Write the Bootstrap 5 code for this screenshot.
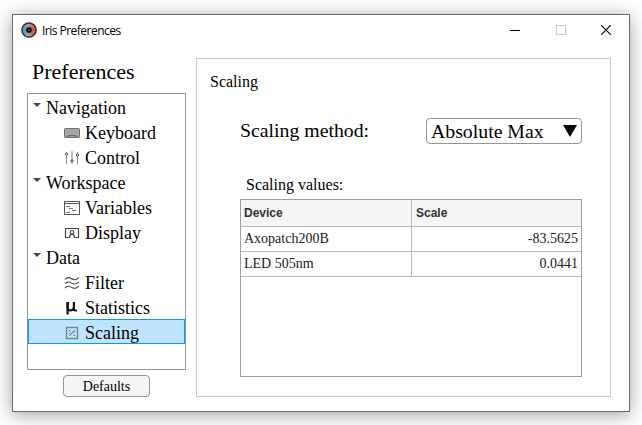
<!DOCTYPE html>
<html lang="en">
<head>
<meta charset="utf-8">
<meta name="viewport" content="width=device-width, initial-scale=1">
<title>Iris Preferences</title>
<link href="https://cdn.jsdelivr.net/npm/bootstrap@5.3.0/dist/css/bootstrap.min.css" rel="stylesheet">
<style>
body{font-family:"Liberation Serif","Times New Roman",serif;color:#000;background:#fff;height:425px;overflow:hidden;padding:14px 12px 13px;line-height:1}
.app-window{width:618px;height:398px;border:1px solid #6b6b6b;background:#fff;box-shadow:0 3px 17px rgba(0,0,0,.38)}
.title-bar{height:30px;padding-left:8px;flex:none}
.title-text{font:12px "Open Sans","Segoe UI",sans-serif;letter-spacing:-.52px;margin-left:5px}
.win-btn{width:45.5px;display:flex;justify-content:center}
.side{width:159px;margin-left:14px}
.side-title{font-size:22px;height:48px;padding:15px 0 0 5px;line-height:24px;white-space:nowrap}
.tree{height:277px;border:1px solid #949494}
.tree-row{height:25px;font-size:18px;line-height:21px;padding-top:4px;border:0}
.tree-row svg{flex:none}
.tree-group{padding-left:5px}
.tree-group svg{margin-right:5px;margin-top:-7px}
.tree-leaf{padding-left:36px}
.tree-leaf svg{margin-right:5px;margin-top:-1px}
.tree-leaf.selected{background:#bfe4ff;box-shadow:inset 0 0 0 1px #0a96ff}
.btn-defaults{width:87px;height:22px;margin:5px 0 0 36px;padding:1px 0 0;font-size:14px;line-height:19px;color:#000;background:#f5f5f5;border:1px solid #949494;border-radius:4px}
.panel{width:415px;height:339px;margin:13px 0 0 10px;border:1px solid #c8c8c8;padding:14px 28px 0 43px}
.panel-title{font-size:16px;line-height:18px;margin-left:-30px}
.method{height:26px;margin-top:27px}
.method-label{font-size:19.8px}
.combo{width:156px;height:26px;border:1px solid #949494;border-radius:4px;padding:0 4px;font-size:19.8px;line-height:24px}
.values-label{font-size:16px;line-height:18px;margin:32px 0 0 6px}
.grid-box{height:178px;width:342px;border:1px solid #a0a0a0;margin-top:5px}
.grid-box table{table-layout:fixed;width:340px;margin:0;font-size:14px;line-height:16px;color:#212121;border-collapse:separate;border-spacing:0}
.grid-box th,.grid-box td{height:25px;padding:0 3px;border-bottom:1px solid #b8b8b8;vertical-align:middle}
.grid-box th{height:27px;background:#f5f5f5;color:#333;font:bold 12px "Liberation Sans",Arial,sans-serif}
.grid-box th:last-child{padding-left:4px}
.grid-box th:first-child,.grid-box td:first-child{width:171px;border-right:1px solid #b8b8b8}
</style>
<script src="https://cdn.jsdelivr.net/npm/bootstrap@5.3.0/dist/js/bootstrap.bundle.min.js"></script>
</head>
<body>
<main class="app-window">
  <header class="title-bar d-flex align-items-center">
    <svg width="16" height="16" viewBox="0 0 16 16">
      <defs><linearGradient id="iris"><stop offset="0" stop-color="#438fb8"/><stop offset=".4" stop-color="#82b5d0"/><stop offset=".6" stop-color="#e07a60"/><stop offset="1" stop-color="#b54e30"/></linearGradient></defs>
      <circle cx="8" cy="8" r="7.1" fill="url(#iris)" stroke="#392f30" stroke-width="1.5"/>
      <circle cx="8" cy="8" r="3.1" fill="#080808" stroke="#6a6268" stroke-width=".8"/><circle cx="8" cy="8" r=".7" fill="#ddd"/>
    </svg>
    <span class="title-text">Iris Preferences</span>
    <div class="d-flex ms-auto">
      <span class="win-btn"><svg width="10" height="10" shape-rendering="crispEdges"><path d="M0 5.5H10" stroke="#000"/></svg></span>
      <span class="win-btn"><svg width="10" height="10" shape-rendering="crispEdges"><rect x=".5" y=".5" width="9" height="9" fill="none" stroke="#c8c8c8"/></svg></span>
      <span class="win-btn"><svg width="10" height="10"><path d="M0 0L10 10M10 0L0 10" stroke="#000" stroke-width="1.1"/></svg></span>
    </div>
  </header>
  <div class="d-flex">
    <nav class="side">
      <div class="side-title">Preferences</div>
      <div class="tree">
        <div class="tree-row tree-group d-flex align-items-center"><svg width="8" height="4"><path d="M0 0H8L4 4Z" fill="#444"/></svg><span>Navigation</span></div>
        <div class="tree-row tree-leaf d-flex align-items-center"><svg width="16" height="16" viewBox="0 0 16 16"><rect x=".5" y="3.5" width="15" height="9" rx=".8" fill="#aaa" stroke="#6c6c6c"/><path d="M2.5 6H13.5M2.5 8H13.5" stroke="#929292" stroke-dasharray="1 1"/><path d="M3 10.5V12M4.5 12V10.5H11.5V12M13 10.5V12" fill="none" stroke="#606060" stroke-width=".9"/></svg><span>Keyboard</span></div>
        <div class="tree-row tree-leaf d-flex align-items-center"><svg width="16" height="16" viewBox="0 0 16 16" fill="#fff" stroke="#444"><path d="M2.5 2V14.5M8 1V13.5M13.5 2V14.5" stroke="#888"/><circle cx="2.5" cy="4.2" r="1.2"/><circle cx="8" cy="11" r="1.2"/><circle cx="13.5" cy="5" r="1.2"/></svg><span>Control</span></div>
        <div class="tree-row tree-group d-flex align-items-center"><svg width="8" height="4"><path d="M0 0H8L4 4Z" fill="#444"/></svg><span>Workspace</span></div>
        <div class="tree-row tree-leaf d-flex align-items-center"><svg width="16" height="16" viewBox="0 0 16 16" fill="none" stroke="#555"><rect x=".5" y="1.5" width="15" height="13"/><path d="M1 3.5H15"/><path d="M2 6.5H6M5 8.5H9M8 10.5H12M2 12.5H6" stroke="#777"/></svg><span>Variables</span></div>
        <div class="tree-row tree-leaf d-flex align-items-center"><svg width="16" height="16" viewBox="0 0 16 16" fill="none" stroke="#444" stroke-width="1.2"><path d="M4.5 12.5H1.5V3.5H14.5V12.5H11.5"/><circle cx="8" cy="7.3" r="1.8"/><path d="M5.5 13V11L7 9.3H9L10.5 11V13"/></svg><span>Display</span></div>
        <div class="tree-row tree-group d-flex align-items-center"><svg width="8" height="4"><path d="M0 0H8L4 4Z" fill="#444"/></svg><span>Data</span></div>
        <div class="tree-row tree-leaf d-flex align-items-center"><svg width="16" height="16" viewBox="0 0 16 16" fill="none" stroke="#444" stroke-width="1.1"><path d="M1 4.5C3 1.5 5 2.3 7.5 3.8S12 5.5 15 2.6"/><path d="M1 8.8C3 5.8 5 6.6 7.5 8.1S12 9.8 15 6.9M1 13.1C3 10.1 5 10.9 7.5 12.4S12 14.1 15 11.2"/></svg><span>Filter</span></div>
        <div class="tree-row tree-leaf d-flex align-items-center"><svg width="16" height="16" viewBox="0 0 16 16" fill="none" stroke="#151515"><path d="M3.6 2V14.5" stroke-width="2.3"/><path d="M3.6 2V7.5C3.6 11.5 9.6 11.5 9.9 7V2V9Q10 11 12.8 10.3" stroke-width="2.2"/></svg><span>Statistics</span></div>
        <div class="tree-row tree-leaf selected d-flex align-items-center"><svg width="16" height="16" viewBox="0 0 16 16" fill="none" stroke="#70818e"><rect x="2.5" y="2.5" width="11" height="11" stroke-width="1.4"/><path d="M5 5L6.5 6.5M10.5 5L5.5 11M9 9.5L11 11M10 7H11M5 8H6" stroke="#50616e"/></svg><span>Scaling</span></div>
      </div>
      <button class="btn btn-defaults d-block" type="button">Defaults</button>
    </nav>
    <section class="panel">
      <div class="panel-title">Scaling</div>
      <div class="method d-flex align-items-center justify-content-between">
        <span class="method-label">Scaling method:</span>
        <div class="combo d-flex align-items-center justify-content-between"><span>Absolute Max</span><svg width="14" height="12"><path d="M0 0H14L7 12Z" fill="#080000"/></svg></div>
      </div>
      <div class="values-label">Scaling values:</div>
      <div class="grid-box">
        <table>
          <thead><tr><th>Device</th><th>Scale</th></tr></thead>
          <tbody>
            <tr><td>Axopatch200B</td><td class="text-end">-83.5625</td></tr>
            <tr><td>LED 505nm</td><td class="text-end">0.0441</td></tr>
          </tbody>
        </table>
      </div>
    </section>
  </div>
</main>
</body>
</html>
